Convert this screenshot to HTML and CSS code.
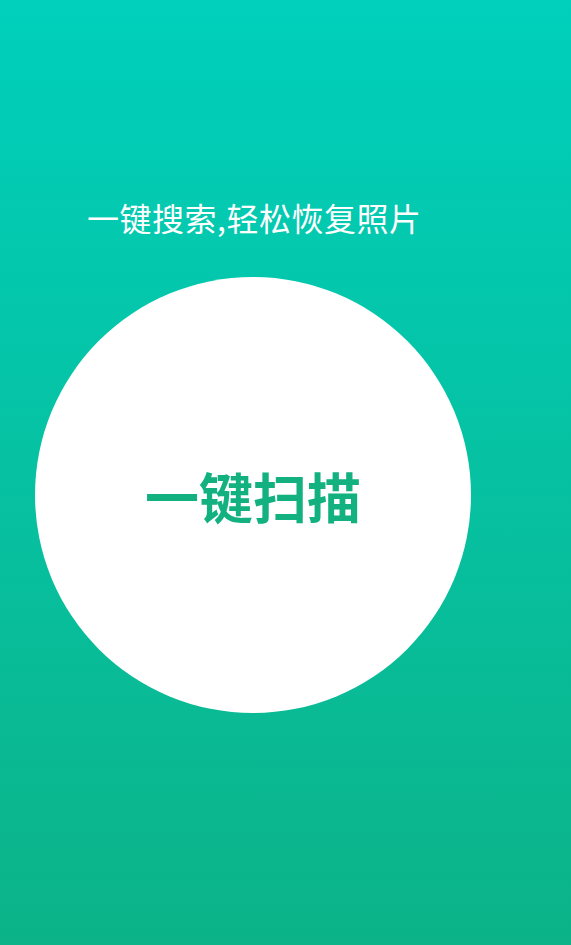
FILE: index.html
```html
<!DOCTYPE html>
<html lang="zh">
<head>
<meta charset="utf-8">
<title>一键扫描</title>
<link rel="stylesheet" href="styles.css">
</head>
<body>
<main class="screen">
  <h1 class="slogan">一键搜索,轻松恢复照片</h1>
  <button class="scan">一键扫描</button>
</main>
</body>
</html>
```
FILE: styles.css
```css
html, body {
  margin: 0;
  padding: 0;
}
body {
  font-family: "Noto Sans CJK SC", "Noto Sans", sans-serif;
}
.screen {
  width: 571px;
  height: 945px;
  background: linear-gradient(180deg, #00d0bc 0%, #0cb388 100%);
  display: flex;
  flex-direction: column;
  align-items: flex-start;
  overflow: hidden;
}
.slogan {
  margin: 197px 0 0 87px;
  font-size: 32px;
  line-height: 40px;
  font-weight: 400;
  color: #ffffff;
  letter-spacing: 0.5px;
}
.scan {
  margin: 40px 0 0 35px;
  width: 436px;
  height: 436px;
  border: none;
  border-radius: 50%;
  background: #ffffff;
  color: #14b180;
  font-family: "Noto Sans CJK SC", "Noto Sans", sans-serif;
  font-size: 54px;
  font-weight: 700;
  padding: 0;
  display: flex;
  align-items: center;
  justify-content: center;
}
```
